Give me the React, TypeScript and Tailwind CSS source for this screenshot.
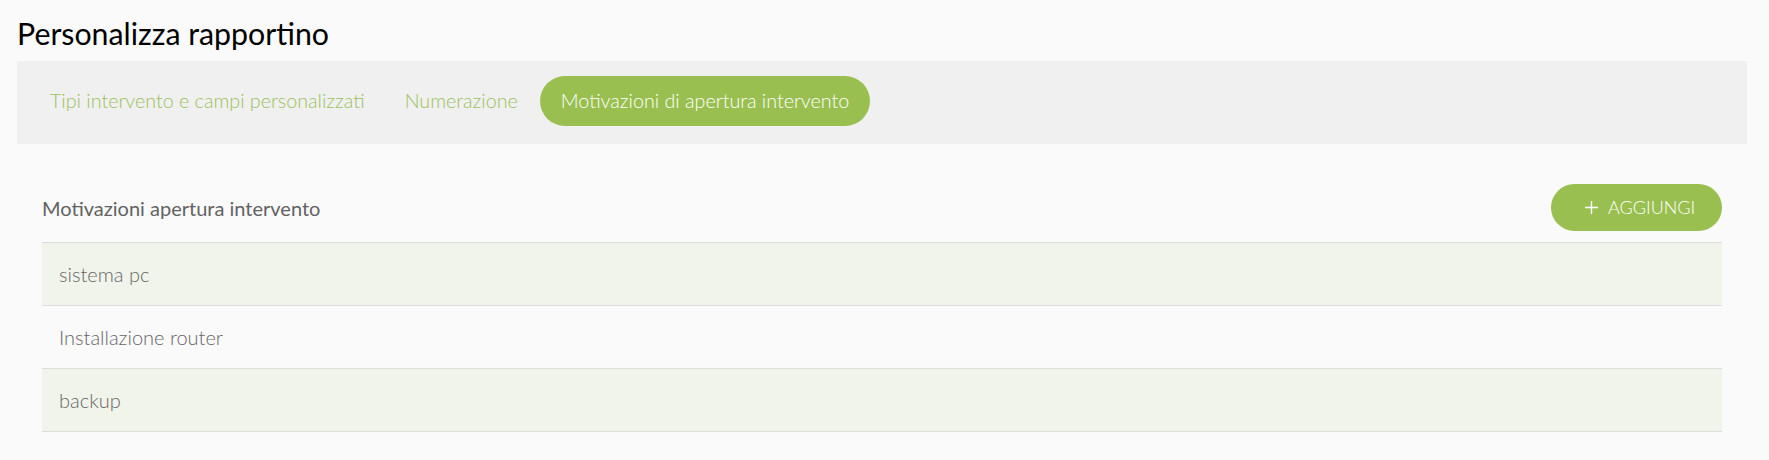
import React from "react";

export default function App() {
  const rows = ["sistema pc", "Installazione router", "backup"];
  return (
    <div className="w-full h-[460px] bg-[#fafafa] overflow-hidden" style={{ fontFamily: "Lato, 'Open Sans', sans-serif" }}>
      <h1 className="ml-[17px] mt-[15px] text-[30.3px] leading-[36px] font-normal text-black">Personalizza rapportino</h1>
      <div className="ml-[17px] mr-[22px] mt-[10px] bg-[#f0f0f0] pl-[13px] pt-[15px] pb-[18px] flex items-center">
        <div className="h-[50px] px-5 flex items-center text-[19.7px] font-light text-[#9bc25b]">Tipi intervento e campi personalizzati</div>
        <div className="h-[50px] pl-5 pr-[22px] flex items-center text-[19.7px] font-light text-[#9bc25b]">Numerazione</div>
        <div className="h-[50px] px-[21px] flex items-center rounded-full bg-[#99bf50] text-[19.7px] font-light text-white">Motivazioni di apertura intervento</div>
      </div>
      <div className="ml-[42px] mr-[47px] pt-[40px]">
        <div className="flex items-center justify-between mb-[11px]">
          <div className="text-[20px] text-[#626262]">Motivazioni apertura intervento</div>
          <button className="w-[171px] h-[47px] rounded-full bg-[#99bf50] text-white flex items-center pl-[34px] text-[18px] font-light">
            <svg width="13" height="13" viewBox="0 0 13 13" className="mr-[10px]">
              <path d="M6.5 0V13M0 6.5H13" stroke="white" strokeWidth="1.4" />
            </svg>
            AGGIUNGI
          </button>
        </div>
        <div className="border-t border-[#dddddd]">
          {rows.map((r, i) => (
            <div key={r} className={`h-[63px] border-b border-[#dddddd] flex items-center pl-[17px] text-[20px] font-light text-[#666666] ${i % 2 === 0 ? "bg-[#f1f4ea]" : ""}`}>
              {r}
            </div>
          ))}
        </div>
      </div>
    </div>
  );
}
